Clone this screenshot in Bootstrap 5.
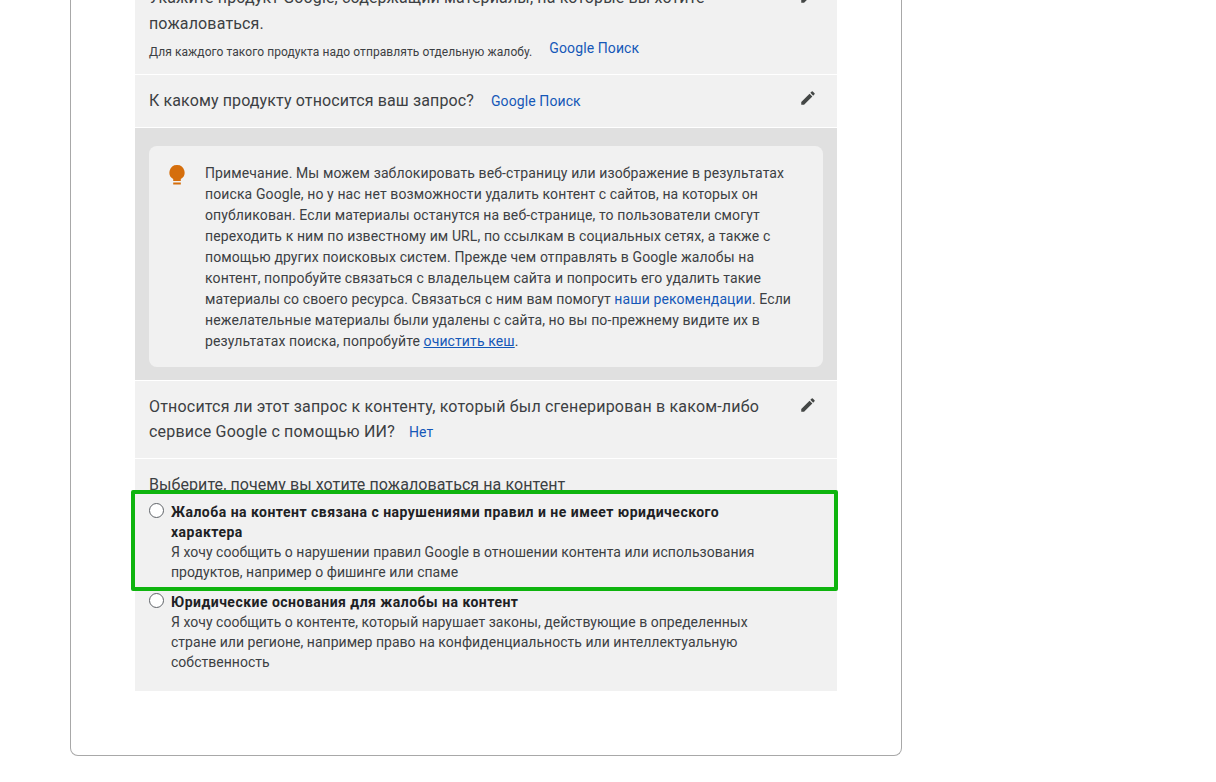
<!DOCTYPE html>
<html lang="ru">
<head>
<meta charset="utf-8">
<title>Жалоба</title>
<link href="https://cdn.jsdelivr.net/npm/bootstrap@5.3.0/dist/css/bootstrap.min.css" rel="stylesheet">
<style>
html,body{height:782px;overflow:hidden;background:#fff}
body{font-family:Roboto,"Noto Sans",sans-serif;color:#202124}
.frame{width:832px;height:801px;margin:-45px 0 0 70px;border:1px solid #a8a8a8;border-radius:0 0 8px 8px;border-top:0;padding-left:64px}
.panel{width:702px;height:736px;background:#f1f1f1}
.rowline{border-bottom:1px solid #fff;padding:0 14px;position:relative}
.q{font-size:16px;line-height:26px;color:#3c4043;letter-spacing:.14px}
.hint{font-size:12px;line-height:18px;color:#3c4043;letter-spacing:.07px;margin-top:6px}
.ans{font-size:14px;color:#1558b8;margin-left:17px;letter-spacing:.1px}
.hint .ans{margin-top:-4px}
.pen{position:absolute;right:20px;width:18px;height:18px;fill:#444746}
.pen1{top:32px}
.pen2{top:14px}
.pen3{top:15px}
.r1{height:120px;padding-top:30px}
.r2{height:53px;padding-top:13px}
.r2 .q{letter-spacing:.12px}
.notewrap{background:#e0e0e0;height:253px;padding:18px 14px 13px;border-bottom:1px solid #fff}
.notebox{background:#f1f1f1;border-radius:8px;height:221px;padding:17px 20px 0 20px;font-size:14px;line-height:21px;color:#3c4043;letter-spacing:.11px}
.notebox a{color:#1558b8;text-decoration:none}
.notebox a.u{text-decoration:underline}
.bulb{width:16px;height:20px;fill:#d56e0c;flex:none;margin-right:20px;margin-top:2px}
.r3{height:78px;padding-top:13px}
.r3 .q{line-height:25px;letter-spacing:.19px}
.r3 .ans{margin-left:14px}
.r4{height:231px;padding-top:12px}
.pick{padding-left:14px;line-height:28px;letter-spacing:.08px}
.opt{font-size:14px;line-height:20px;color:#3c4043;display:flex;padding-left:14px;letter-spacing:.03px}
.opt b{display:block;color:#202124;font-weight:700;letter-spacing:.48px}
.circ{width:15px;height:15px;border:1px solid #5f6368;border-radius:50%;flex:none;margin:1px 7px 0 0;background:#fff}
.hl{margin:-9px -1px 0 -4px;border:4px solid #0eb40e;border-radius:2px;background:#f1f1f1;height:101px;padding:8px 0 0 14px;position:relative}
.opt2{margin-top:1px}
</style>
</head>
<body>
<div class="frame">
<div class="panel">
  <div class="rowline r1">
    <div class="q">Укажите продукт Google, содержащий материалы, на которые вы хотите<br>пожаловаться.</div>
    <svg class="pen pen1" viewBox="0 0 24 24"><path d="M3 17.25V21h3.75L17.81 9.94l-3.75-3.75L3 17.25zM20.71 7.04a1 1 0 0 0 0-1.41l-2.34-2.34a1 1 0 0 0-1.41 0l-1.83 1.83 3.75 3.75 1.83-1.83z"/></svg>
    <div class="hint d-flex"><span>Для каждого такого продукта надо отправлять отдельную жалобу.</span><span class="ans">Google Поиск</span></div>
  </div>
  <div class="rowline r2">
    <div class="q">К какому продукту относится ваш запрос?<span class="ans">Google Поиск</span></div>
    <svg class="pen pen2" viewBox="0 0 24 24"><path d="M3 17.25V21h3.75L17.81 9.94l-3.75-3.75L3 17.25zM20.71 7.04a1 1 0 0 0 0-1.41l-2.34-2.34a1 1 0 0 0-1.41 0l-1.83 1.83 3.75 3.75 1.83-1.83z"/></svg>
  </div>
  <div class="notewrap">
    <div class="notebox d-flex">
      <svg class="bulb" viewBox="0 0 16 20"><path d="M8 0a7.500 7.500 0 0 0-3.800 14V16h7.600v-2A7.500 7.500 0 0 0 8 0zM4.200 17.500h7.600v2H4.200z"/></svg>
      <div>Примечание. Мы можем заблокировать веб-страницу или изображение в результатах поиска Google, но у нас нет возможности удалить контент с сайтов, на которых он опубликован. Если материалы останутся на веб-странице, то пользователи смогут переходить к ним по известному им URL, по ссылкам в социальных сетях, а также с помощью других поисковых систем. Прежде чем отправлять в Google жалобы на контент, попробуйте связаться с владельцем сайта и попросить его удалить такие материалы со своего ресурса. Связаться с ним вам помогут <a href="#">наши рекомендации</a>. Если нежелательные материалы были удалены с сайта, но вы по-прежнему видите их в результатах поиска, попробуйте <a class="u" href="#">очистить кеш</a>.</div>
    </div>
  </div>
  <div class="rowline r3">
    <div class="q">Относится ли этот запрос к контенту, который был сгенерирован в каком-либо<br>сервисе Google с помощью ИИ?<span class="ans">Нет</span></div>
    <svg class="pen pen3" viewBox="0 0 24 24"><path d="M3 17.25V21h3.75L17.81 9.94l-3.75-3.75L3 17.25zM20.71 7.04a1 1 0 0 0 0-1.41l-2.34-2.34a1 1 0 0 0-1.41 0l-1.83 1.83 3.75 3.75 1.83-1.83z"/></svg>
  </div>
  <div class="r4">
    <div class="q pick">Выберите, почему вы хотите пожаловаться на контент</div>
    <div class="opt hl">
      <span class="circ"></span>
      <div><b>Жалоба на контент связана с нарушениями правил и не имеет юридического<br>характера</b>Я хочу сообщить о нарушении правил Google в отношении контента или использования<br>продуктов, например о фишинге или спаме</div>
    </div>
    <div class="opt opt2">
      <span class="circ"></span>
      <div><b>Юридические основания для жалобы на контент</b>Я хочу сообщить о контенте, который нарушает законы, действующие в определенных<br>стране или регионе, например право на конфиденциальность или интеллектуальную<br>собственность</div>
    </div>
  </div>
</div>
</div>
<script src="https://cdn.jsdelivr.net/npm/bootstrap@5.3.0/dist/js/bootstrap.bundle.min.js"></script>
</body>
</html>
